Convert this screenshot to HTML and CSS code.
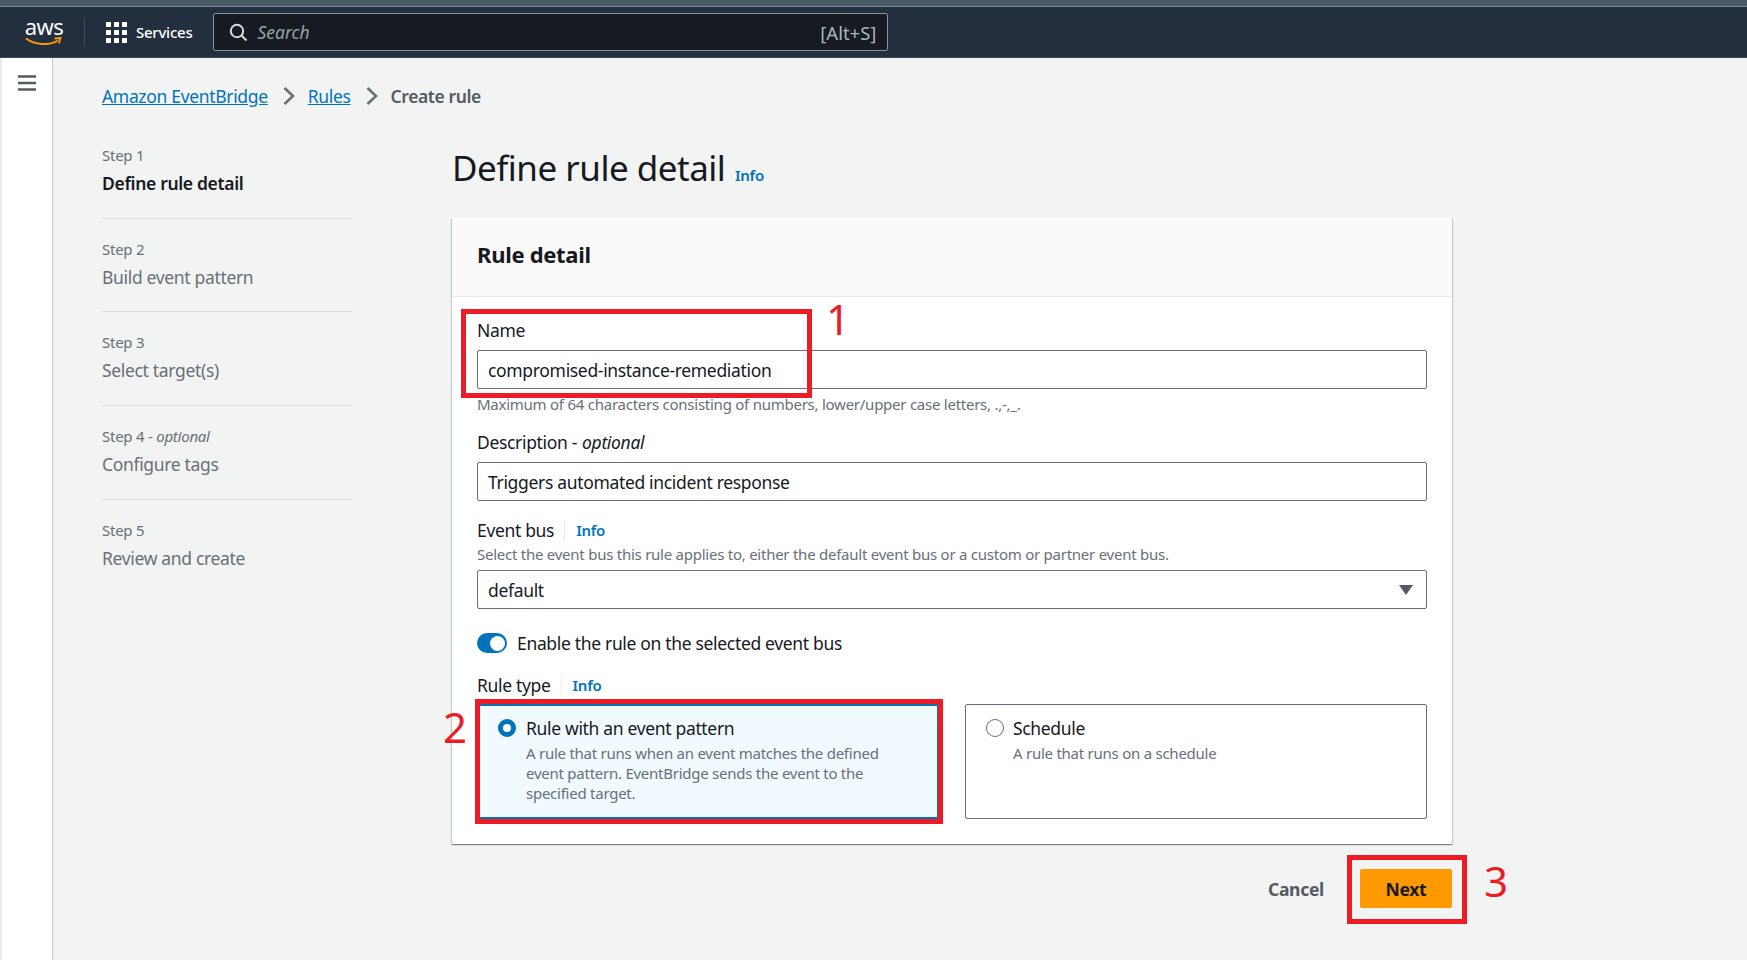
FILE: index.html
```html
<!DOCTYPE html>
<html lang="en">
<head>
    <meta charset="UTF-8">
    <meta name="viewport" content="width=device-width, initial-scale=1.0">
    <title>Create rule</title>
    <link rel="stylesheet" href="styles.css">
</head>
<body>
    <div class="top-strip"></div>
    <header class="topnav">
        <div class="logo">
            <span class="logo-text">aws</span>
            <svg class="logo-smile" width="38" height="9" viewBox="0 0 38 9">
                <path d="M1 1.5C10 8 24 9 33 3.5" fill="none" stroke="#ff9900" stroke-width="2"/>
                <path d="M29.5 1.5L35.5 1L34 6.5" fill="none" stroke="#ff9900" stroke-width="1.8"/>
            </svg>
        </div>
        <div class="nav-sep"></div>
        <svg class="grid-icon" width="21" height="21" viewBox="0 0 21 21" fill="#fff">
            <rect x="0" y="0" width="5" height="5"/><rect x="8" y="0" width="5" height="5"/><rect x="16" y="0" width="5" height="5"/>
            <rect x="0" y="8" width="5" height="5"/><rect x="8" y="8" width="5" height="5"/><rect x="16" y="8" width="5" height="5"/>
            <rect x="0" y="16" width="5" height="5"/><rect x="8" y="16" width="5" height="5"/><rect x="16" y="16" width="5" height="5"/>
        </svg>
        <span class="services">Services</span>
        <div class="search">
            <svg width="19" height="19" viewBox="0 0 19 19" fill="none" stroke="#d5dbdb" stroke-width="2">
                <circle cx="8" cy="8" r="6.2"/>
                <path d="M12.5 12.5L17.5 17.5"/>
            </svg>
            <span class="search-text">Search</span>
            <span class="search-key">[Alt+S]</span>
        </div>
    </header>

    <div class="page">
        <aside class="sidenav">
            <svg width="18" height="16" viewBox="0 0 18 16" fill="none" stroke="#545b64" stroke-width="2.5">
                <path d="M0 1.5H18M0 8H18M0 14.5H18"/>
            </svg>
        </aside>

        <div class="content">
            <nav class="breadcrumb">
                <a href="#">Amazon EventBridge</a>
                <svg class="crumb-arrow" width="12" height="18" viewBox="0 0 12 18" fill="none" stroke="#687078" stroke-width="2.6"><path d="M1.5 1L10 9L1.5 17"/></svg>
                <a href="#">Rules</a>
                <svg class="crumb-arrow" width="12" height="18" viewBox="0 0 12 18" fill="none" stroke="#687078" stroke-width="2.6"><path d="M1.5 1L10 9L1.5 17"/></svg>
                <span class="crumb-current">Create rule</span>
            </nav>

            <div class="wizard">
                <ul class="steps">
                    <li class="step active"><small>Step 1</small><span>Define rule detail</span></li>
                    <li class="step"><small>Step 2</small><span>Build event pattern</span></li>
                    <li class="step"><small>Step 3</small><span>Select target(s)</span></li>
                    <li class="step"><small>Step 4 - <i>optional</i></small><span>Configure tags</span></li>
                    <li class="step"><small>Step 5</small><span>Review and create</span></li>
                </ul>

                <main class="main">
                    <h1>Define rule detail <a href="#" class="info">Info</a></h1>

                    <section class="card">
                        <div class="card-header"><h2>Rule detail</h2></div>
                        <div class="card-body">
                            <div class="label">Name</div>
                            <div class="input">compromised-instance-remediation</div>
                            <div class="hint hint-below">Maximum of 64 characters consisting of numbers, lower/upper case letters, .,-,_.</div>

                            <div class="label label-desc">Description - <i>optional</i></div>
                            <div class="input">Triggers automated incident response</div>

                            <div class="label label-bus"><span>Event bus</span><a href="#" class="info">Info</a></div>
                            <div class="hint hint-bus">Select the event bus this rule applies to, either the default event bus or a custom or partner event bus.</div>
                            <div class="input select">default
                                <svg width="14" height="10" viewBox="0 0 14 10" fill="#545b64"><path d="M0 0H14L7 10Z"/></svg>
                            </div>

                            <div class="toggle-row">
                                <span class="toggle"></span>
                                <span>Enable the rule on the selected event bus</span>
                            </div>

                            <div class="label label-type"><span>Rule type</span><a href="#" class="info">Info</a></div>
                            <div class="tiles">
                                <div class="tile selected">
                                    <span class="radio"></span>
                                    <div>
                                        <div class="tile-title">Rule with an event pattern</div>
                                        <div class="tile-desc">A rule that runs when an event matches the defined event pattern. EventBridge sends the event to the specified target.</div>
                                    </div>
                                </div>
                                <div class="tile">
                                    <span class="radio"></span>
                                    <div>
                                        <div class="tile-title">Schedule</div>
                                        <div class="tile-desc">A rule that runs on a schedule</div>
                                    </div>
                                </div>
                            </div>
                        </div>
                    </section>

                    <div class="actions">
                        <button class="btn-cancel">Cancel</button>
                        <button class="btn-next">Next</button>
                    </div>
                </main>
            </div>
        </div>
    </div>

    <!-- red markers drawn over the screenshot -->
    <div class="mark mark-1"></div>
    <div class="mark mark-2"></div>
    <div class="mark mark-3"></div>
    <span class="num num-1">1</span>
    <span class="num num-2">2</span>
    <span class="num num-3">3</span>
</body>
</html>
```

FILE: styles.css
```css
* {
    box-sizing: border-box;
}
html, body {
    height: 960px;
    overflow: hidden;
}
body {
    margin: 0;
    background-color: #f2f3f3;
    color: #16191f;
    font-family: "Noto Sans", "Liberation Sans", sans-serif;
    font-size: 17.5px;
    letter-spacing: -0.33px;
    position: relative;
    display: flex;
    flex-direction: column;
}
a {
    color: #0073bb;
}

/* top bar */
.top-strip {
    height: 7px;
    background-color: #4a5a66;
    border-bottom: 1px solid #7d8b95;
}
.topnav {
    height: 51px;
    background-color: #232f3e;
    border-bottom: 1px solid #3c4856;
    display: flex;
    align-items: center;
    padding-left: 25px;
    color: #fff;
}
.logo {
    width: 38px;
    height: 32px;
    display: flex;
    flex-direction: column;
    align-items: center;
}
.logo-text {
    font-size: 22px;
    line-height: 20px;
    font-weight: 400;
    letter-spacing: -0.5px;
}
.logo-smile {
    margin-top: 1px;
}
.nav-sep {
    width: 1px;
    height: 28px;
    margin-left: 21px;
    background-color: #414d5c;
}
.grid-icon {
    margin-left: 21px;
}
.services {
    margin-left: 9px;
    font-size: 15px;
    font-weight: 500;
    letter-spacing: -0.25px;
}
.search {
    width: 675px;
    height: 38px;
    margin-left: 21px;
    padding: 0 11px 0 15px;
    background-color: #161a23;
    border: 1px solid #879596;
    border-radius: 2px;
    display: flex;
    align-items: center;
}
.search-text {
    margin-left: 9px;
    color: #95a5a6;
    font-style: italic;
    letter-spacing: 0;
    flex: 1;
}
.search-key {
    color: #aab7b8;
    font-size: 18.5px;
    letter-spacing: 0;
}

/* page */
.page {
    flex: 1;
    display: flex;
}
.sidenav {
    width: 53px;
    background-color: #fff;
    border-left: 2px solid #ececec;
    border-right: 1px solid #c6c9cc;
    padding: 17px 0 0 16px;
}
.sidenav svg {
    display: block;
}
.content {
    flex: 1;
    padding: 26px 0 0 49px;
}
.breadcrumb {
    height: 24px;
    display: flex;
    align-items: center;
    line-height: 24px;
}
.crumb-arrow {
    margin: 0 13px 0 15px;
}
.crumb-current {
    color: #545b64;
    font-weight: 600;
    letter-spacing: -0.4px;
}

/* wizard */
.wizard {
    padding-top: 38px;
    display: flex;
}
.steps {
    list-style: none;
    margin: -1px 100px 0 0;
    padding: 0;
    width: 250px;
}
.step {
    padding-bottom: 22.67px;
    margin-bottom: 20px;
    border-bottom: 1px solid #d5dbdb;
    color: #687078;
}
.step:last-child {
    border-bottom: none;
}
.step small {
    display: block;
    font-size: 15px;
    line-height: 20px;
    letter-spacing: -0.25px;
    margin-bottom: 6px;
}
.step span {
    display: block;
    line-height: 24px;
}
.step.active span {
    color: #16191f;
    font-weight: 600;
}

.main {
    width: 1000px;
}
h1 {
    margin: 0 0 28px;
    font-size: 35px;
    line-height: 44px;
    font-weight: 400;
    letter-spacing: -0.5px;
}
.info {
    font-size: 15px;
    line-height: 20px;
    font-weight: 600;
    letter-spacing: -0.25px;
    text-decoration: none;
}
h1 .info {
    margin-left: 1px;
}

/* card */
.card {
    background-color: #fff;
    box-shadow: 0 1px 1px 0 rgba(0, 28, 36, 0.3), 1px 1px 1px 0 rgba(0, 28, 36, 0.15), -1px 1px 1px 0 rgba(0, 28, 36, 0.15);
}
.card-header {
    height: 79px;
    padding: 20px 25px 0;
    background-color: #fafafa;
    border-bottom: 1px solid #eaeded;
}
h2 {
    margin: 0;
    font-size: 22px;
    line-height: 32px;
    font-weight: 700;
    letter-spacing: -0.3px;
}
.card-body {
    padding: 22px 25px 25px;
}
.label {
    line-height: 22px;
    margin-bottom: 9px;
    display: flex;
    align-items: center;
}
.label i {
    margin-left: 5px;
}
.label-desc {
    margin-top: 17px;
}
.label-bus {
    margin-top: 18px;
    margin-bottom: 3px;
}
.label-type {
    margin-top: 19px;
    margin-bottom: 8px;
}
.label .info {
    margin-left: 10px;
    padding-left: 11px;
    border-left: 1px solid #eaeded;
}
.input {
    height: 39px;
    padding: 0 10px;
    background-color: #fff;
    border: 1px solid #687078;
    border-radius: 2px;
    display: flex;
    align-items: center;
}
.select {
    justify-content: space-between;
    padding-right: 13px;
}
.hint {
    font-size: 15px;
    line-height: 20px;
    letter-spacing: -0.25px;
    color: #687078;
}
.hint-below {
    margin-top: 5px;
}
.hint-bus {
    margin-bottom: 6px;
}
.toggle-row {
    height: 24px;
    margin-top: 22px;
    display: flex;
    align-items: center;
    gap: 10px;
}
.toggle {
    width: 30px;
    height: 20px;
    border-radius: 10px;
    background-color: #0073bb;
    display: flex;
    align-items: center;
    justify-content: flex-end;
    padding-right: 2px;
}
.toggle::after {
    content: "";
    width: 15px;
    height: 15px;
    border-radius: 50%;
    background-color: #fff;
}

/* radio tiles */
.tiles {
    display: grid;
    grid-template-columns: 462px 462px;
    gap: 26px;
}
.tile {
    height: 115px;
    padding: 12px 20px 0;
    background-color: #fff;
    border: 1px solid #687078;
    border-radius: 2px;
    display: flex;
    gap: 9px;
}
.tile.selected {
    padding: 11px 19px 0;
    background-color: #f1faff;
    border: 2px solid #0073bb;
    gap: 10px;
}
.radio {
    flex: none;
    width: 18px;
    height: 18px;
    margin-top: 2px;
    border: 1.5px solid #687078;
    border-radius: 50%;
    background-color: #fff;
}
.selected .radio {
    border: 5px solid #0073bb;
}
.tile-title {
    line-height: 22px;
}
.tile-desc {
    margin-top: 4px;
    font-size: 15px;
    line-height: 20px;
    letter-spacing: -0.25px;
    color: #687078;
}

/* buttons */
.actions {
    margin-top: 25px;
    display: flex;
    justify-content: flex-end;
    align-items: center;
    gap: 36px;
}
.actions button {
    font-family: inherit;
    font-size: 17.5px;
    font-weight: 700;
    letter-spacing: -0.3px;
    border: none;
    padding: 0;
}
.btn-cancel {
    color: #545b64;
    background: none;
}
.btn-next {
    width: 92px;
    height: 39px;
    color: #16191f;
    background-color: #ff9900;
    border-radius: 2px;
}

/* annotations */
.mark {
    position: absolute;
    border: 5px solid #ed1c24;
}
.mark-1 {
    left: 461px;
    top: 309px;
    width: 351px;
    height: 89px;
}
.mark-2 {
    left: 475px;
    top: 699px;
    width: 468px;
    height: 125px;
}
.mark-3 {
    left: 1347px;
    top: 855px;
    width: 120px;
    height: 69px;
}
.num {
    position: absolute;
    color: #ed1c24;
    font-size: 42px;
    line-height: 42px;
}
.num-1 {
    left: 826px;
    top: 298px;
}
.num-2 {
    left: 443px;
    top: 706px;
}
.num-3 {
    left: 1484px;
    top: 860px;
}
```
